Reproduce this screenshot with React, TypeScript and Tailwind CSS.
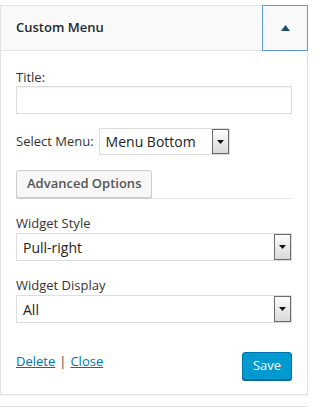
import React from "react";

const font = { fontFamily: '"Open Sans", "Noto Sans", sans-serif' };

function Arrow() {
  return (
    <div className="w-[17px] self-stretch border border-[#6b6b6b] bg-gradient-to-b from-[#fdfdfd] to-[#d9d9d9] flex items-center justify-center">
      <svg width="7" height="4" viewBox="0 0 7 4">
        <polygon points="0,0 7,0 3.5,4" fill="#111" />
      </svg>
    </div>
  );
}

function Select({ value, className }: { value: string; className: string }) {
  return (
    <div className={`flex items-stretch border border-[#dddddd] bg-white ${className}`}>
      <div className="flex-1 flex items-center pl-[6px] text-[14px] text-[#222]">{value}</div>
      <Arrow />
    </div>
  );
}

export default function App() {
  return (
    <div className="w-[311px] h-[407px] bg-white relative overflow-hidden" style={font}>
      <div className="pt-[5px]">
        <div className="w-[308px] border border-[#e2e2e2] bg-white shadow-[0_1px_1px_rgba(0,0,0,0.04)]">
          <div className="h-[45px] flex items-stretch bg-[#f9f9f9] border-b border-[#e2e2e2]">
            <div className="flex-1 flex items-center pl-[15px] text-[13px] font-semibold text-[#23282d]">
              Custom Menu
            </div>
            <div className="w-[46px] border border-[#5b9dd9] flex items-center justify-center -mt-px -mr-px -mb-px h-[46px]">
              <svg width="9" height="6" viewBox="0 0 9 6">
                <polygon points="0,6 9,6 4.5,0" fill="#1d4f6b" />
              </svg>
            </div>
          </div>
          <div className="px-[15px] pt-[17px] pb-[14px] text-[13px] text-[#333]">
            <div className="leading-[18px]">Title:</div>
            <div className="h-[28px] border border-[#dddddd] bg-white shadow-[inset_0_1px_2px_rgba(0,0,0,0.07)]" />
            <div className="mt-[14px] flex items-center h-[27px]">
              <span className="mr-[5px]">Select Menu:</span>
              <Select value="Menu Bottom" className="w-[131px] h-[27px]" />
            </div>
            <div className="mt-[15px] border-b border-[#e5e5e5]">
              <div className="inline-flex items-center h-[28px] px-[10px] border border-[#cccccc] rounded-[3px] bg-[#f7f7f7] shadow-[0_1px_0_#ccc] font-semibold text-[#555] text-[13px]">
                Advanced Options
              </div>
            </div>
            <div className="mt-[15px] leading-[18px]">Widget Style</div>
            <Select value="Pull-right" className="mt-[1px] h-[28px]" />
            <div className="mt-[15px] leading-[18px]">Widget Display</div>
            <Select value="All" className="mt-[1px] h-[28px]" />
            <div className="mt-[24px] flex items-start justify-between">
              <div className="mt-[5px] text-[13px] text-[#444]">
                <a className="text-[#0073aa] underline">Delete</a>
                <span className="mx-[4px]">|</span>
                <a className="text-[#0073aa] underline">Close</a>
              </div>
              <div className="mt-[5px] w-[50px] h-[28px] flex items-center justify-center rounded-[3px] bg-[#0099d0] border border-[#0073aa] shadow-[0_1px_0_#006799] text-white text-[13px]">
                Save
              </div>
            </div>
          </div>
        </div>
        <div className="mt-[11px] w-[308px] h-[10px] border border-[#e2e2e2] bg-white" />
      </div>
    </div>
  );
}
